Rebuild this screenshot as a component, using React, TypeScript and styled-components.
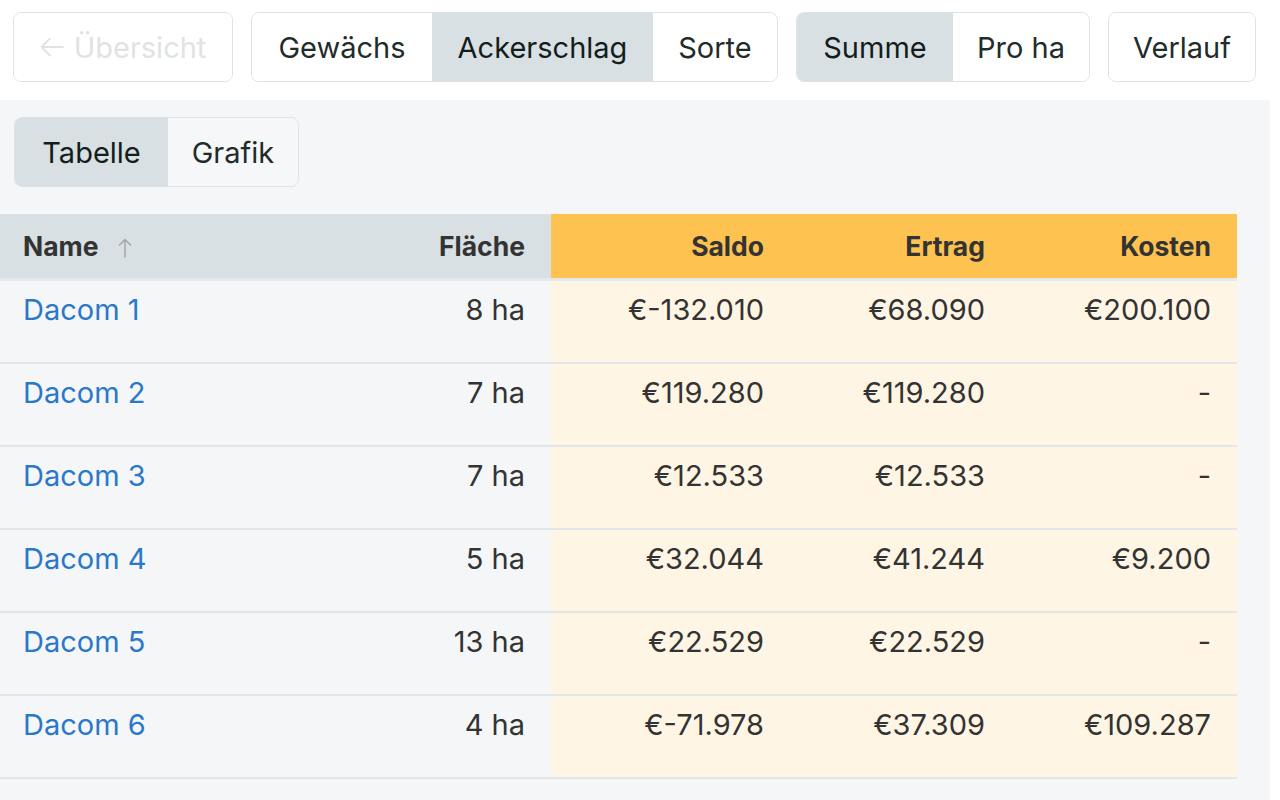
import styled, { createGlobalStyle } from 'styled-components';

type Row = {
  name: string;
  area: number;
  saldo: string;
  ertrag: string;
  kosten: string;
};

const rows: Row[] = [
  { name: 'Dacom 1', area: 8, saldo: '€-132.010', ertrag: '€68.090', kosten: '€200.100' },
  { name: 'Dacom 2', area: 7, saldo: '€119.280', ertrag: '€119.280', kosten: '-' },
  { name: 'Dacom 3', area: 7, saldo: '€12.533', ertrag: '€12.533', kosten: '-' },
  { name: 'Dacom 4', area: 5, saldo: '€32.044', ertrag: '€41.244', kosten: '€9.200' },
  { name: 'Dacom 5', area: 13, saldo: '€22.529', ertrag: '€22.529', kosten: '-' },
  { name: 'Dacom 6', area: 4, saldo: '€-71.978', ertrag: '€37.309', kosten: '€109.287' },
];

const GlobalStyle = createGlobalStyle`
  html, body {
    margin: 0;
    background: #ffffff;
    font-family: Inter, "Noto Sans", sans-serif;
  }
`;

const Page = styled.div`
  width: 1270px;
  height: 800px;
  background: #f5f6f8;
  display: flex;
  flex-direction: column;
`;

const Toolbar = styled.div`
  background: #ffffff;
  height: 100px;
  box-sizing: border-box;
  padding: 12px 13px;
  display: flex;
  gap: 18px;
`;

const Group = styled.div`
  display: flex;
  border: 1.5px solid #dde3e4;
  border-radius: 8px;
  overflow: hidden;
  height: 70px;
  box-sizing: border-box;
`;

const Segment = styled.button<{ $active?: boolean; $width: number; $muted?: boolean }>`
  width: ${(p) => p.$width}px;
  border: none;
  margin: 0;
  padding: 0;
  display: flex;
  align-items: center;
  justify-content: center;
  gap: 10px;
  font-family: inherit;
  font-size: 29px;
  background: ${(p) => (p.$active ? '#d9e0e3' : p.$muted ? '#f5f7f8' : '#ffffff')};
  color: ${(p) => (p.$active ? '#131d1b' : '#1f2d2a')};
  cursor: pointer;

  &:disabled {
    color: #dfe3e5;
    cursor: default;
  }
`;

const ViewBar = styled.div`
  padding: 17px 14px 27px;
  display: flex;
`;

const TableWrap = styled.div`
  width: 1270px;
`;

const Table = styled.table`
  width: 1237px;
  border-collapse: collapse;
  table-layout: fixed;
  font-size: 29px;
  color: #333333;
`;

const HeadCell = styled.th<{ $accent?: boolean; $left?: boolean }>`
  height: 64px;
  padding: 0 26px 0 ${(p) => (p.$left ? '23px' : '0')};
  text-align: ${(p) => (p.$left ? 'left' : 'right')};
  font-size: 26.5px;
  font-weight: 700;
  color: #333333;
  background: ${(p) => (p.$accent ? '#fdc24f' : '#d9e0e3')};
  border-bottom: 3px solid #e5e8ea;
`;

const SortIcon = styled.svg`
  margin-left: 19px;
  vertical-align: -2px;
  color: #a0a6a9;
`;

const BodyRow = styled.tr`
  border-bottom: 2px solid #e3e6e8;
`;

const Cell = styled.td<{ $accent?: boolean; $left?: boolean }>`
  height: 83px;
  box-sizing: border-box;
  vertical-align: top;
  padding: 8px 26px 0 ${(p) => (p.$left ? '23px' : '0')};
  text-align: ${(p) => (p.$left ? 'left' : 'right')};
  line-height: 42px;
  background: ${(p) => (p.$accent ? '#fef5e4' : 'transparent')};
`;

const FieldLink = styled.a`
  color: #2a78c9;
  text-decoration: none;
`;

// thin back arrow used in the disabled overview button
const BackArrow = () => (
  <svg width="24" height="20" viewBox="0 0 24 20" fill="none" stroke="currentColor" strokeWidth="1.8" strokeLinecap="round" strokeLinejoin="round">
    <path d="M23 10H1.5M10 1.5L1.5 10L10 18.5" />
  </svg>
);

const SortUp = () => (
  <SortIcon width="14" height="20" viewBox="0 0 14 20" fill="none" stroke="currentColor" strokeWidth="1.5" strokeLinecap="round" strokeLinejoin="round">
    <path d="M7 19V1.5M1.5 7L7 1.5L12.5 7" />
  </SortIcon>
);

export default function App() {
  return (
    <>
      <GlobalStyle />
      <Page>
        <Toolbar>
          <Group>
            <Segment $width={218} disabled>
              <BackArrow />
              Übersicht
            </Segment>
          </Group>
          <Group>
            <Segment $width={180}>Gewächs</Segment>
            <Segment $width={221} $active>
              Ackerschlag
            </Segment>
            <Segment $width={124}>Sorte</Segment>
          </Group>
          <Group>
            <Segment $width={156} $active>
              Summe
            </Segment>
            <Segment $width={136}>Pro ha</Segment>
          </Group>
          <Group>
            <Segment $width={146}>Verlauf</Segment>
          </Group>
        </Toolbar>

        <ViewBar>
          <Group>
            <Segment $width={153} $active>
              Tabelle
            </Segment>
            <Segment $width={130} $muted>
              Grafik
            </Segment>
          </Group>
        </ViewBar>

        <TableWrap>
          <Table>
            <colgroup>
              <col style={{ width: 380 }} />
              <col style={{ width: 171 }} />
              <col style={{ width: 239 }} />
              <col style={{ width: 221 }} />
              <col style={{ width: 226 }} />
            </colgroup>
            <thead>
              <tr>
                <HeadCell $left>
                  Name
                  <SortUp />
                </HeadCell>
                <HeadCell>Fläche</HeadCell>
                <HeadCell $accent>Saldo</HeadCell>
                <HeadCell $accent>Ertrag</HeadCell>
                <HeadCell $accent>Kosten</HeadCell>
              </tr>
            </thead>
            <tbody>
              {rows.map((row) => (
                <BodyRow key={row.name}>
                  <Cell $left>
                    <FieldLink href="#">{row.name}</FieldLink>
                  </Cell>
                  <Cell>{row.area} ha</Cell>
                  <Cell $accent>{row.saldo}</Cell>
                  <Cell $accent>{row.ertrag}</Cell>
                  <Cell $accent>{row.kosten}</Cell>
                </BodyRow>
              ))}
            </tbody>
          </Table>
        </TableWrap>
      </Page>
    </>
  );
}
